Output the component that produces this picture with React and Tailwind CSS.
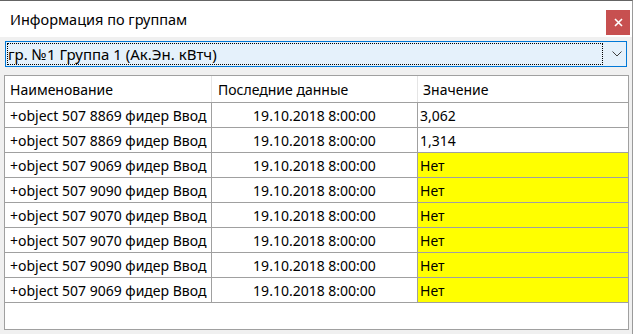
import React from "react";

const rows = [
  ["+object 507 8869 фидер Ввод", "19.10.2018 8:00:00", "3,062", false],
  ["+object 507 8869 фидер Ввод", "19.10.2018 8:00:00", "1,314", false],
  ["+object 507 9069 фидер Ввод", "19.10.2018 8:00:00", "Нет", true],
  ["+object 507 9090 фидер Ввод", "19.10.2018 8:00:00", "Нет", true],
  ["+object 507 9070 фидер Ввод", "19.10.2018 8:00:00", "Нет", true],
  ["+object 507 9070 фидер Ввод", "19.10.2018 8:00:00", "Нет", true],
  ["+object 507 9090 фидер Ввод", "19.10.2018 8:00:00", "Нет", true],
  ["+object 507 9069 фидер Ввод", "19.10.2018 8:00:00", "Нет", true],
];

export default function App() {
  return (
    <div
      className="w-[633px] h-[334px] bg-[#f0f0f0] border-t border-[#646464] border-r border-r-[#9a9a9a] overflow-hidden text-black"
      style={{ fontFamily: '"Noto Sans", "Open Sans", sans-serif' }}
    >
      <div className="h-[36px] bg-white flex items-center justify-between pl-[10px] pr-[2px]">
        <span className="text-[14.5px] leading-none">Информация по группам</span>
        <div className="w-[24px] h-[25px] bg-[#c75050] flex items-center justify-center mt-[6px]">
          <svg width="9" height="9" viewBox="0 0 9 9">
            <path d="M1 1L8 8M8 1L1 8" stroke="white" strokeWidth="1.6" />
          </svg>
        </div>
      </div>
      <div className="pt-[4px] pl-[5px] pr-[5px]">
        <div className="h-[26px] border border-[#0078d7] bg-[#e5f1fb] flex items-center pl-[1px] pr-[1px]">
          <div className="flex-1 h-[22px] border border-dotted border-black flex items-center">
            <span className="text-[15px] leading-none">гр. №1 Группа 1 (Ак.Эн. кВтч)</span>
          </div>
          <div className="w-[22px] flex justify-end pr-[3px]">
            <svg width="10" height="6" viewBox="0 0 10 6">
              <path d="M0.5 0.5L5 5L9.5 0.5" stroke="#404040" strokeWidth="1" fill="none" />
            </svg>
          </div>
        </div>
      </div>
      <div className="mt-[8px] ml-[4px] mr-[3px] h-[255px] border border-[#a0a0a0] bg-white text-[14px]">
        <div className="flex h-[27px] items-center border-b border-[#a0a0a0]">
          <div className="w-[207px] h-full flex items-center pl-[5px] border-r border-[#e5e5e5]">Наименование</div>
          <div className="w-[206px] h-full flex items-center pl-[6px] border-r border-[#e5e5e5]">Последние данные</div>
          <div className="flex-1 h-full flex items-center pl-[5px]">Значение</div>
        </div>
        {rows.map((r, i) => (
          <div key={i} className="flex h-[25px] border-b border-[#a0a0a0]">
            <div className="w-[207px] flex items-center pl-[5px] border-r border-[#a0a0a0] whitespace-nowrap overflow-hidden">{r[0]}</div>
            <div className="w-[206px] flex items-center justify-center border-r border-[#a0a0a0]">{r[1]}</div>
            <div className={"flex-1 flex items-center pl-[2px] " + (r[3] ? "bg-[#ffff00]" : "")}>{r[2]}</div>
          </div>
        ))}
      </div>
    </div>
  );
}
